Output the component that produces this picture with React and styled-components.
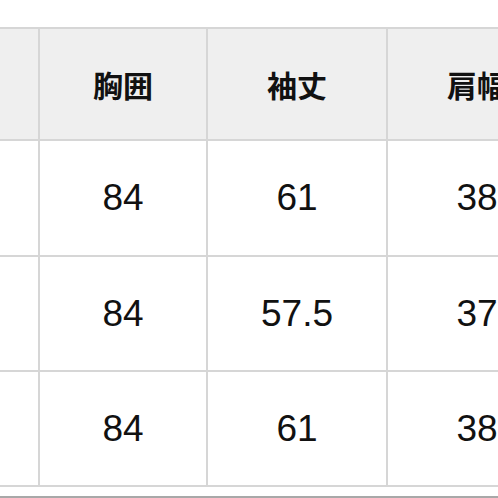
import styled, { createGlobalStyle } from "styled-components";

const GlobalStyle = createGlobalStyle`
  html, body {
    margin: 0;
    padding: 0;
    background: #fff;
  }
`;

const Page = styled.div`
  width: 498px;
  height: 498px;
  overflow: hidden;
  padding-top: 27px;
  box-sizing: border-box;
  background: #fff;
`;

const Sheet = styled.div`
  display: grid;
  grid-template-columns: 140px 168px 180px 180px;
  grid-template-rows: 112px 116px 115px 115px;
  width: max-content;
  margin-left: -100px;
  border-top: 2px solid #d6d6d6;
`;

const Cell = styled.div`
  box-sizing: border-box;
  display: flex;
  align-items: center;
  justify-content: center;
  border-right: 2px solid #d6d6d6;
  border-bottom: 2px solid #d6d6d6;
  background: ${(props) => (props.head ? "#efefef" : "#fff")};
  color: #111;
  font-family: ${(props) =>
    props.head
      ? `"Noto Sans CJK JP", "Noto Sans", sans-serif`
      : `"Liberation Sans", Arial, sans-serif`};
  font-size: ${(props) => (props.head ? "30px" : "37px")};
  font-weight: ${(props) => (props.head ? 700 : 400)};
  white-space: nowrap;
`;

const Rule = styled.div`
  margin-top: 9px;
  height: 2px;
  background: #a8a8a8;
`;

const headers = ["着丈", "胸囲", "袖丈", "肩幅"];
const rows = [
  ["", "84", "61", "38"],
  ["", "84", "57.5", "37"],
  ["", "84", "61", "38"],
];

export default function App() {
  return (
    <>
      <GlobalStyle />
      <Page>
        <Sheet>
          {headers.map((h, i) => (
            <Cell head key={"h" + i}>
              {i === 0 ? "" : h}
            </Cell>
          ))}
          {rows.map((row, r) =>
            row.map((v, c) => <Cell key={r + "-" + c}>{v}</Cell>)
          )}
        </Sheet>
        <Rule />
      </Page>
    </>
  );
}
